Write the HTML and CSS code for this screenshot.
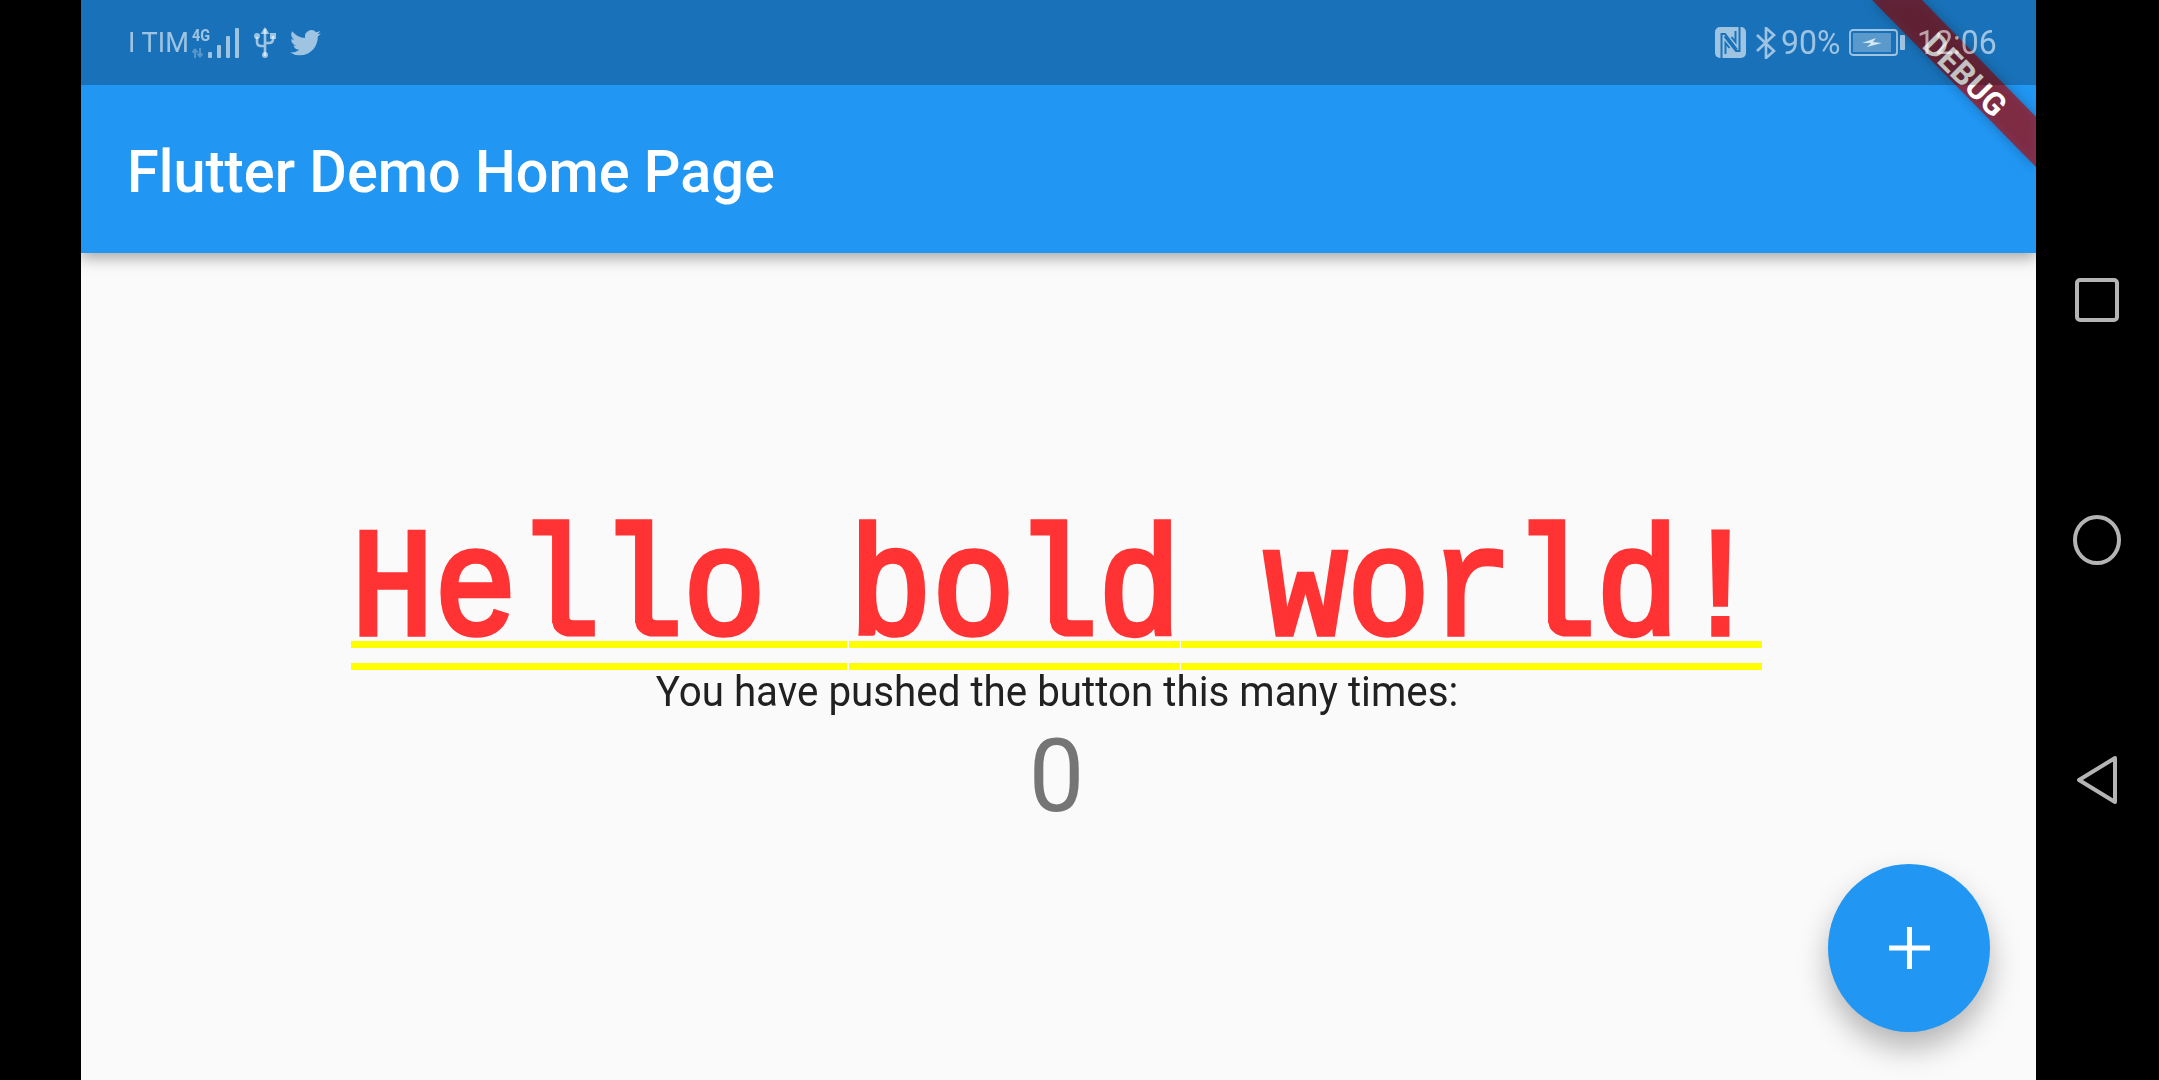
FILE: index.html
```html
<!DOCTYPE html>
<html lang="en">
<head>
<meta charset="utf-8">
<title>Flutter Demo Home Page</title>
<link rel="stylesheet" href="styles.css">
</head>
<body>
<div class="device">
  <main class="screen">
    <div class="app-bar"><h1 class="title">Flutter Demo Home Page</h1></div>
    <section class="content">
      <div class="headline">
        <span class="run"><span class="glyphs">Hello </span></span><span class="run"><span class="glyphs">bold</span></span><span class="run"><span class="glyphs"> world!</span></span>
      </div>
      <p class="caption">You have pushed the button this many times:</p>
      <p class="counter">0</p>
    </section>
    <button class="fab" aria-label="Increment">
      <svg viewBox="0 0 41 42" width="41" height="42"><path d="M18 0h5v18.500h18v5H23V42h-5V23.500H0v-5h18z"/></svg>
    </button>
    <div class="banner">
      <svg class="banner-band" viewBox="0 0 164 167" width="164" height="167"><path d="M0 0h50l114 117v50z"/></svg>
      <span class="banner-text">DEBUG</span>
    </div>
    <header class="status-bar">
      <div class="status-group">
        <span class="carrier">I TIM</span>
        <div class="network">
          <span class="net-type">4G</span>
          <svg class="net-arrows" viewBox="0 0 14 10" width="14" height="10"><path d="M3 10V2M0.5 4.5 3 1.5 5.5 4.5M8 0v8M5.5 5.5 8 8.5 10.5 5.500" fill="none" stroke="currentColor" stroke-width="2"/></svg>
        </div>
        <svg class="signal" viewBox="0 0 31 30" width="31" height="30"><rect x="0" y="24" width="4" height="6" rx="1"/><rect x="9" y="17" width="4" height="13" rx="1"/><rect x="18" y="8" width="4" height="22" rx="1"/><rect x="27" y="0" width="4" height="30" rx="1"/></svg>
        <svg class="usb" viewBox="0 0 22 31" width="22" height="31"><path d="M11 2v27M3 10v5q0 4 4 4h4M19 9v3q0 4-4 4h-4" fill="none" stroke="currentColor" stroke-width="2.600"/><path d="M11 0l4.500 7h-9z"/><circle cx="3" cy="9" r="3"/><rect x="16" y="6" width="6" height="6"/><circle cx="11" cy="28" r="3"/></svg>
        <svg class="twitter" viewBox="0 0 24 20" width="31" height="26"><path d="M24 2.400a9.800 9.800 0 0 1-2.800.8A4.900 4.900 0 0 0 23.300.5a9.800 9.800 0 0 1-3.100 1.200A4.900 4.900 0 0 0 11.800 6.200 13.900 13.900 0 0 1 1.700.9a4.900 4.900 0 0 0 1.500 6.600 4.900 4.900 0 0 1-2.200-.6v.1a4.900 4.900 0 0 0 3.900 4.800 4.900 4.900 0 0 1-2.200.1 4.900 4.900 0 0 0 4.600 3.400A9.900 9.900 0 0 1 0 17.300 13.900 13.900 0 0 0 7.500 19.500c9.100 0 14-7.500 14-14v-.6A10 10 0 0 0 24 2.400z"/></svg>
      </div>
      <div class="status-group">
        <svg class="nfc" viewBox="0 0 31 31" width="31" height="31"><rect width="31" height="31" rx="5"/><path class="nfc-cut" d="M6.500 31V7h3.500l12 15.500M24.500 0v24H21L9.500 9.500"/><path class="nfc-cut" d="M10.500 27v-11l4 5M20.500 4v11l-4-5"/></svg>
        <svg class="bluetooth" viewBox="0 0 20 32" width="20" height="32"><path d="M1 8l17 16-8 7V1l8 7L1 24" fill="none" stroke="currentColor" stroke-width="2.600"/></svg>
        <span class="status-text battery-level">90%</span>
        <div class="battery">
          <svg viewBox="0 0 57 27" width="57" height="27"><rect x="1" y="1" width="47" height="25" rx="3" fill="none" stroke="currentColor" stroke-width="1.800"/><rect class="battery-fill" x="4" y="4" width="38" height="19"/><path class="bolt" d="M13 14l14-5-3 4 9 1-15 4 4-4z"/><rect x="51" y="6" width="5" height="15" rx="1"/></svg>
        </div>
        <span class="status-text clock">12:06</span>
      </div>
    </header>
  </main>
  <nav class="nav-bar">
    <svg viewBox="0 0 44 44" width="44" height="44"><rect x="2" y="2" width="40" height="40" rx="3"/></svg>
    <svg viewBox="0 0 48 50" width="48" height="50"><ellipse cx="24" cy="25" rx="22" ry="23"/></svg>
    <svg viewBox="0 0 42 50" width="42" height="50"><path d="M39 3 3 25l36 22z"/></svg>
  </nav>
</div>
</body>
</html>
```
FILE: styles.css
```css
* { box-sizing: border-box; }
html, body { margin: 0; height: 100%; background: #000; overflow: hidden; }
body { font-family: Roboto, "Liberation Sans", sans-serif; }

.device { display: flex; height: 1080px; padding-left: 81px; }
.screen {
  position: relative;
  display: flex;
  flex-direction: column;
  width: 1955px;
  height: 1080px;
  overflow: hidden;
  background: #fafafa;
}

.status-bar {
  position: absolute;
  top: 0;
  left: 0;
  right: 0;
  z-index: 3;
  display: flex;
  justify-content: space-between;
  align-items: center;
  height: 85px;
  padding: 0 41px 0 47px;
  background: rgba(0, 0, 0, .24);
  color: rgba(255, 255, 255, .58);
}
.status-group { display: flex; align-items: center; }
.status-group svg { display: block; fill: currentColor; }
.carrier { font-size: 28px; font-weight: 400; width: 64px; white-space: nowrap; transform: scaleX(.97); transform-origin: left; }
.network { display: flex; flex-direction: column; align-items: flex-start; width: 16px; gap: 5px; }
.net-type { font: 700 17px/15px "Roboto", sans-serif; transform: scaleX(.85); transform-origin: left; }
.net-arrows { opacity: .45; }
.usb { margin-left: 15px; }
.twitter { margin-left: 14px; }
.nfc-cut { fill: none; stroke: #1a72b8; stroke-width: 2; }
.bluetooth { margin-left: 10px; }
.status-text { font-size: 33px; font-weight: 400; display: block; transform: scaleX(.97); }
.battery-level { margin-left: 5px; width: 60px; white-space: nowrap; transform-origin: left; }
.battery { margin-left: 8px; }
.battery-fill { fill: rgba(255, 255, 255, .28); }
.bolt { fill: rgba(255, 255, 255, .75); }
.clock { margin-left: 11px; width: 78px; white-space: nowrap; transform-origin: left; }

.app-bar {
  position: relative;
  z-index: 1;
  display: flex;
  flex: none;
  align-items: center;
  height: 253px;
  padding: 90px 0 0 46px;
  background: #2196f3;
  box-shadow: 0 5px 14px rgba(0, 0, 0, .34);
}
.title {
  margin: 0;
  color: #fff;
  font-size: 60px;
  font-weight: 500;
  line-height: 1;
  white-space: nowrap;
  transform: scaleX(.96);
  transform-origin: left;
}

.content {
  flex: 1;
  display: flex;
  flex-direction: column;
  align-items: center;
  padding-top: 305px;
  padding-right: 4px;
}
.headline { display: flex; white-space: pre; }
.run { display: block; }
.run::after {
  content: "";
  display: block;
  height: 15px;
  margin: 3px 2px 0 0;
  border-top: 7px solid #ffff00;
  border-bottom: 7px solid #ffff00;
}
.run:nth-child(2)::after { margin-right: 1px; }
.run:last-child::after { margin-right: 0; }
.glyphs {
  display: block;
  color: #ff3333;
  font-family: "Liberation Mono", monospace;
  font-size: 138.300px;
  font-weight: 400;
  line-height: 80px;
  -webkit-text-stroke: 5px #ff3333;
  transform: scaleY(1.11);
  transform-origin: 50% 100%;
}
.caption {
  margin: -2px 0 0;
  color: #212121;
  font-size: 42px;
  line-height: 48px;
  white-space: nowrap;
  transform: scaleX(.96);
}
.counter {
  margin: 0;
  color: #757575;
  font-size: 102px;
  line-height: 120px;
  transform: scaleX(.97);
}

.fab {
  position: absolute;
  left: 1747px;
  top: 864px;
  z-index: 1;
  display: flex;
  align-items: center;
  justify-content: center;
  width: 162px;
  height: 168px;
  padding: 0;
  border: 0;
  border-radius: 50%;
  background: #2196f3;
  box-shadow: 0 16px 30px rgba(0, 0, 0, .28);
}
.fab svg { fill: #fff; display: block; }

.banner {
  position: absolute;
  top: 0;
  right: 0;
  z-index: 2;
  width: 164px;
  height: 167px;
}
.banner-band {
  display: block;
  fill: rgba(160, 20, 30, .75);
  filter: drop-shadow(0 0 6px rgba(0, 0, 0, .35));
}
.banner-text {
  position: absolute;
  left: 38px;
  top: 55px;
  width: 110px;
  color: #fff;
  font-size: 32px;
  font-weight: 700;
  line-height: 40px;
  text-align: center;
  transform: rotate(45deg);
}

.nav-bar {
  display: grid;
  grid-auto-rows: 240px;
  justify-items: center;
  align-items: center;
  width: 123px;
  padding: 180px 2px 0 0;
}
.nav-bar svg {
  display: block;
  fill: none;
  stroke: #b4b4b4;
  stroke-width: 4;
  stroke-linejoin: round;
}
```
